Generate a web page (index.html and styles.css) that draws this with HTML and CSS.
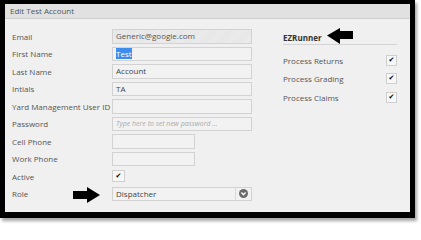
FILE: index.html
```html
<!DOCTYPE html>
<html>
<head>
<meta charset="utf-8">
<link rel="stylesheet" href="styles.css">
</head>
<body>
<div class="frame">
  <div class="header">Edit Test Account</div>
  <div class="content">
    <div class="form">
      <div class="row"><span class="label">Email</span><div class="input disabled">Generic@google.com</div></div>
      <div class="row"><span class="label">First Name</span><div class="input"><span class="sel">Test</span></div></div>
      <div class="row"><span class="label">Last Name</span><div class="input">Account</div></div>
      <div class="row"><span class="label">Intials</span><div class="input">TA</div></div>
      <div class="row"><span class="label">Yard Management User ID</span><div class="input"></div></div>
      <div class="row"><span class="label">Password</span><div class="input placeholder">Type here to set new password ...</div></div>
      <div class="row"><span class="label">Cell Phone</span><div class="input short"></div></div>
      <div class="row"><span class="label">Work Phone</span><div class="input short"></div></div>
      <div class="row"><span class="label">Active</span><div class="check big">✔</div></div>
      <div class="row"><span class="label">Role</span>
        <div class="input select"><span class="seltext">Dispatcher</span><span class="dd"><svg width="9" height="9" viewBox="0 0 9 9"><circle cx="4.5" cy="4.5" r="4.5" fill="#6b6b6b"/><path d="M2.4 3.6 L4.5 5.7 L6.6 3.6" fill="none" stroke="#fff" stroke-width="1.4"/></svg></span></div>
      </div>
    </div>
    <div class="panel">
      <div class="ptitle">EZRunner</div>
      <div class="prow"><span class="plabel">Process Returns</span><div class="check">✔</div></div>
      <div class="prow"><span class="plabel">Process Grading</span><div class="check">✔</div></div>
      <div class="prow"><span class="plabel">Process Claims</span><div class="check">✔</div></div>
    </div>
  </div>
  <svg class="arrow arrow-left" width="27" height="17" viewBox="0 0 27 17"><path d="M0 7.5 L13 0 L13 3 L26 3 L26 11 L13 11 L13 16 Z" fill="#000"/></svg>
  <svg class="arrow arrow-right" width="29" height="17" viewBox="0 0 29 17"><path d="M28 8 L15 0 L15 4 L1 4 L1 12 L15 12 L15 16 Z" fill="#000"/></svg>
</div>
</body>
</html>
```

FILE: styles.css
```css
html, body {
  margin: 0;
  padding: 0;
  background: #fff;
}
body {
  font-family: "Open Sans", "Liberation Sans", sans-serif;
  font-size: 8px;
  color: #555;
  width: 421px;
  height: 225px;
  overflow: hidden;
}
.frame {
  position: relative;
  width: 405px;
  height: 208px;
  border-style: solid;
  border-color: #000;
  border-width: 4px 5px 6px 5px;
  background: #f0f0f0;
  box-shadow: 2px 3px 3px rgba(0,0,0,0.35);
}
.header {
  height: 14px;
  line-height: 14px;
  background: #e1e1e1;
  border-bottom: 1px solid #cfcfcf;
  padding-left: 5px;
  color: #555;
  font-size: 8px;
}
.content {
  display: flex;
  padding: 8.5px 0 0 7px;
}
.form {
  display: flex;
  flex-direction: column;
  width: 240px;
}
.row {
  display: flex;
  align-items: center;
  height: 17.5px;
}
.label {
  width: 100px;
  flex: none;
  white-space: nowrap;
}
.input {
  box-sizing: border-box;
  width: 140px;
  height: 14.5px;
  border: 1px solid #d2d2d2;
  background: #f2f2f2;
  color: #444;
  padding-left: 3px;
  line-height: 12px;
  font-size: 8px;
  white-space: nowrap;
  overflow: hidden;
}
.input.disabled {
  background: repeating-linear-gradient(135deg, #e6e6e6 0, #e6e6e6 1px, #ececec 1px, #ececec 2px);
  color: #555;
}
.input.short {
  width: 83px;
}
.input.placeholder {
  font-style: italic;
  color: #aaa;
  font-size: 7px;
}
.sel {
  background: #3b8ef0;
  color: #fff;
}
.select {
  display: flex;
  justify-content: space-between;
  padding-right: 0;
}
.seltext {
  line-height: 12px;
}
.dd {
  width: 15px;
  border-left: 1px solid #d8d8d8;
  display: flex;
  align-items: center;
  justify-content: center;
}
.dd svg {
  display: block;
}
.check {
  box-sizing: border-box;
  width: 11px;
  height: 11px;
  border: 1px solid #cfcfcf;
  background: #f7f7f7;
  color: #000;
  font-size: 7px;
  font-weight: bold;
  line-height: 9px;
  text-align: center;
  font-family: "DejaVu Sans", sans-serif;
}
.check.big {
  width: 13px;
  height: 12px;
  line-height: 10px;
}
.panel {
  margin-left: 31px;
  width: 114px;
}
.ptitle {
  margin-top: 4.5px;
  height: 11px;
  line-height: 11px;
  padding-bottom: 1px;
  border-bottom: 1px solid #d4d4d4;
  font-weight: bold;
  color: #333;
}
.ptitle + .prow {
  margin-top: 5.75px;
}
.prow {
  display: flex;
  align-items: center;
  justify-content: space-between;
  height: 18.5px;
}
.arrow {
  position: absolute;
  display: block;
}
.arrow-left {
  left: 322px;
  top: 23.5px;
}
.arrow-right {
  left: 67px;
  top: 183px;
}
```
